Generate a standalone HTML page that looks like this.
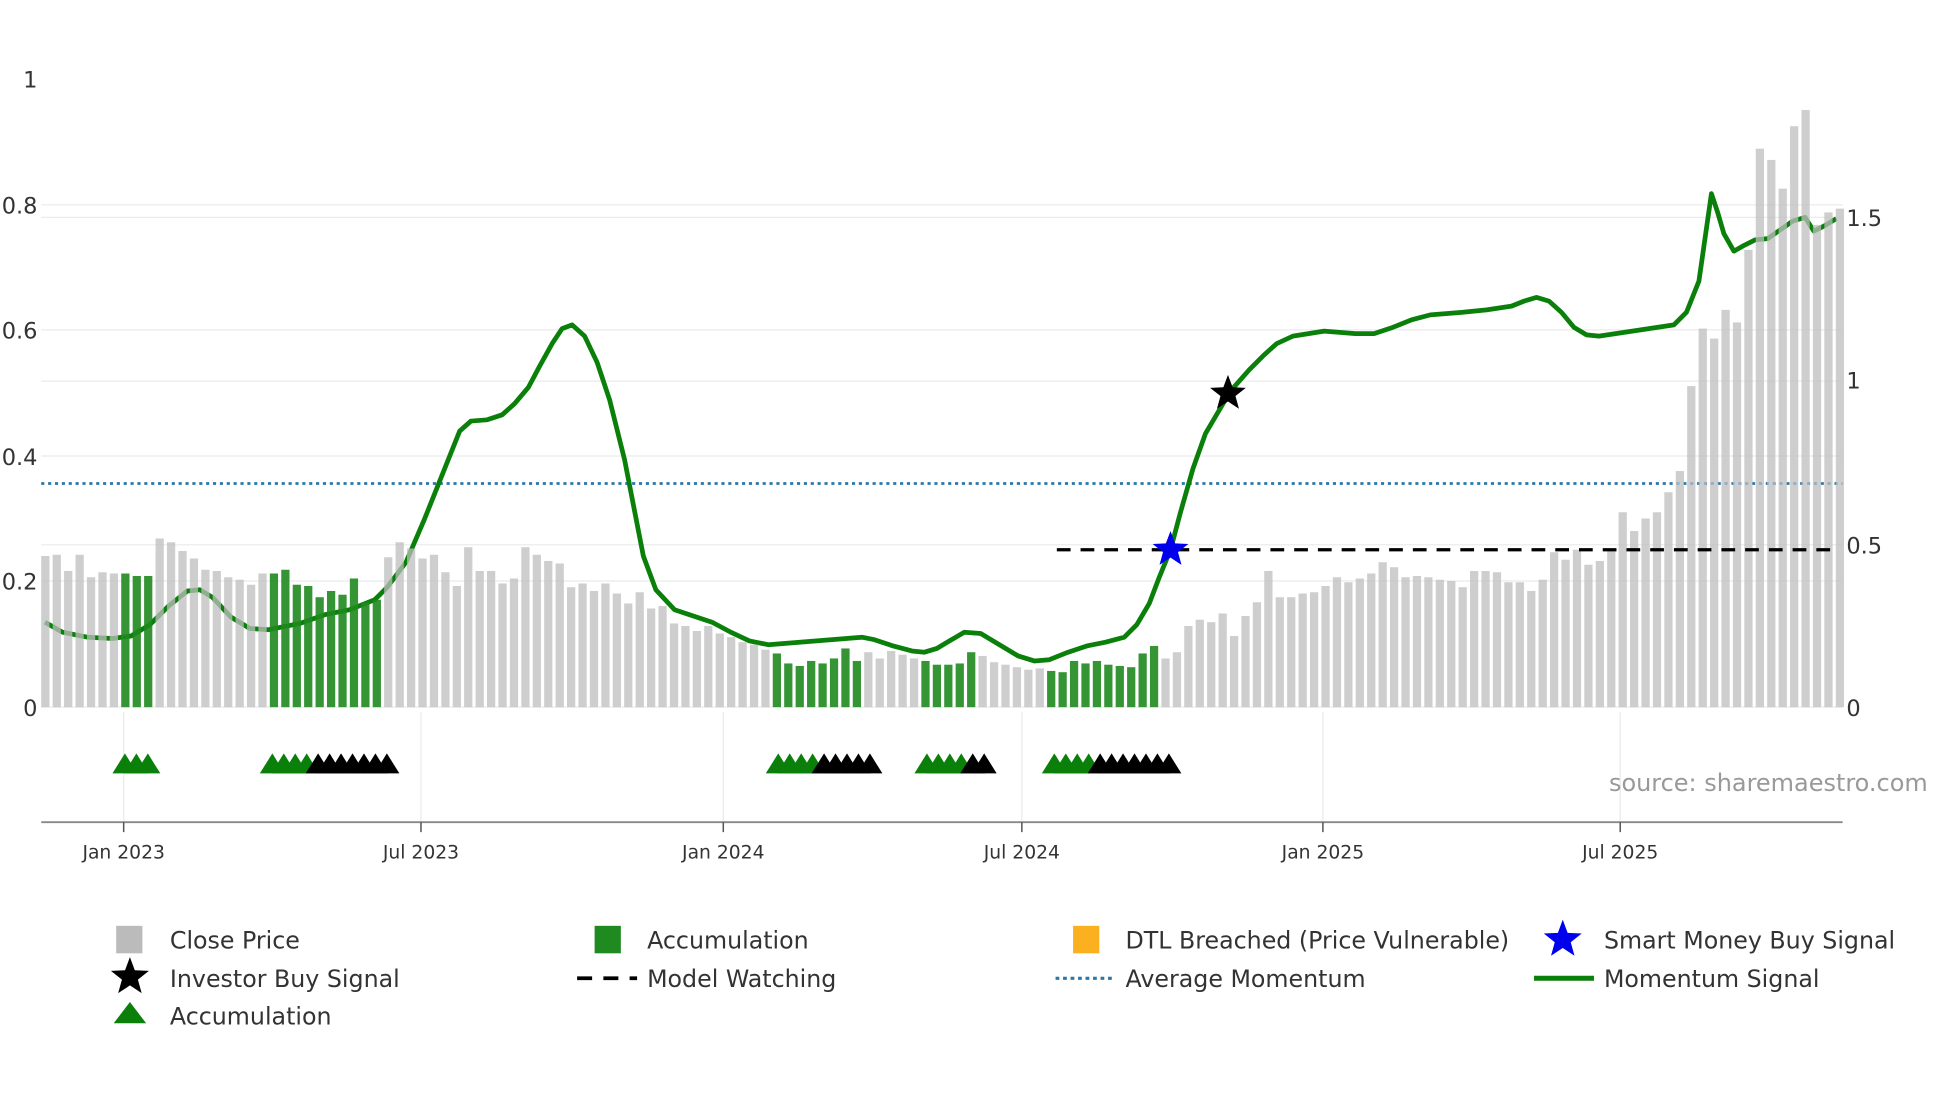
<!DOCTYPE html>
<html><head><meta charset="utf-8"><style>
html,body{margin:0;padding:0;background:#fff;}
svg{display:block;font-family:"DejaVu Sans","Liberation Sans",sans-serif;}
</style></head><body>
<svg id="s" width="1960" height="1102" viewBox="0 0 1569 882" preserveAspectRatio="none" xmlns="http://www.w3.org/2000/svg">
<g stroke="#ebebeb" stroke-width="1">
<line x1="33" x2="1475" y1="164" y2="164"/><line x1="33" x2="1475" y1="174" y2="174"/>
<line x1="33" x2="1475" y1="264" y2="264"/><line x1="33" x2="1475" y1="305" y2="305"/>
<line x1="33" x2="1475" y1="365" y2="365"/><line x1="33" x2="1475" y1="436" y2="436"/>
<line x1="33" x2="1475" y1="465" y2="465"/><line x1="33" x2="1475" y1="566" y2="566"/>
<line x1="99" x2="99" y1="570" y2="658"/><line x1="337" x2="337" y1="570" y2="658"/>
<line x1="579" x2="579" y1="570" y2="658"/><line x1="818" x2="818" y1="570" y2="658"/>
<line x1="1059" x2="1059" y1="570" y2="658"/><line x1="1297" x2="1297" y1="570" y2="658"/>
</g>
<line x1="33" x2="1475" y1="387" y2="387" stroke="#2a77aa" stroke-width="2.2" stroke-dasharray="2.5,3"/>
<polyline id="mom" fill="none" stroke="#0a800a" stroke-width="3.8" stroke-linejoin="round"/>
<g id="bars"></g>
<line x1="846" x2="1470" y1="440" y2="440" stroke="#000" stroke-width="2.6" stroke-dasharray="11,8"/>
<g id="tri"></g>
<polygon id="st1" fill="#000"/>
<polygon id="st2" fill="#0000ee"/>
<line x1="33" x2="1475" y1="658" y2="658" stroke="#888" stroke-width="1.5"/>
<g stroke="#555" stroke-width="1.2">
<line x1="99" x2="99" y1="658" y2="666"/><line x1="337" x2="337" y1="658" y2="666"/>
<line x1="579" x2="579" y1="658" y2="666"/><line x1="818" x2="818" y1="658" y2="666"/>
<line x1="1059" x2="1059" y1="658" y2="666"/><line x1="1297" x2="1297" y1="658" y2="666"/>
</g>
<g font-size="15" fill="#333" text-anchor="middle">
<text x="99" y="687">Jan 2023</text><text x="337" y="687">Jul 2023</text>
<text x="579" y="687">Jan 2024</text><text x="818" y="687">Jul 2024</text>
<text x="1059" y="687">Jan 2025</text><text x="1297" y="687">Jul 2025</text>
</g>
<g font-size="18" fill="#333" text-anchor="end">
<text x="30" y="70">1</text><text x="30" y="171">0.8</text><text x="30" y="271">0.6</text>
<text x="30" y="372">0.4</text><text x="30" y="472">0.2</text><text x="30" y="573">0</text>
</g>
<g font-size="18" fill="#333">
<text x="1478" y="181">1.5</text><text x="1478" y="311">1</text><text x="1478" y="443">0.5</text><text x="1478" y="573">0</text>
</g>
<text x="1288" y="633" font-size="19.2" fill="#999">source: sharemaestro.com</text>
<g font-size="19" fill="#333">
<rect x="93" y="741" width="21" height="22" fill="#bbb"/><text x="136" y="759">Close Price</text>
<rect x="476" y="741" width="21" height="22" fill="#1f8a1f"/><text x="518" y="759">Accumulation</text>
<rect x="859" y="741" width="21" height="22" fill="#fbb020"/><text x="901" y="759">DTL Breached (Price Vulnerable)</text>
<polygon id="lst2" fill="#0000ee"/><text x="1284" y="759">Smart Money Buy Signal</text>
<polygon id="lst1" fill="#000"/><text x="136" y="790">Investor Buy Signal</text>
<line x1="462" x2="510" y1="783" y2="783" stroke="#000" stroke-width="3" stroke-dasharray="12,9"/><text x="518" y="790">Model Watching</text>
<line x1="845" x2="890" y1="783" y2="783" stroke="#2a77aa" stroke-width="2.5" stroke-dasharray="3,3"/><text x="901" y="790">Average Momentum</text>
<line x1="1228" x2="1276" y1="783" y2="783" stroke="#0a800a" stroke-width="4"/><text x="1284" y="790">Momentum Signal</text>
<polygon points="91,819 104,802 117,819" fill="#0a800a"/><text x="136" y="820">Accumulation</text>
</g>
</svg>
<script>
var NS="http://www.w3.org/2000/svg";
var tops=[445,444,457,444,462,458,459,459,461,461,431,434,441,447,456,457,462,464,468,459,459,456,468,469,478,473,476,463,482,480,446,434,439,447,444,458,469,438,457,457,467,463,438,444,449,451,470,467,473,467,475,483,474,487,485,499,501,505,501,507,510,514,516,520,523,531,533,529,531,527,519,529,522,527,521,524,527,529,532,532,531,522,525,530,532,534,536,535,537,538,529,531,529,532,533,534,523,517,527,522,501,496,498,491,509,493,482,457,478,478,475,474,469,462,466,463,459,450,454,462,461,462,464,465,470,457,457,458,466,466,473,464,442,448,440,452,449,440,410,425,415,410,394,377,309,263,271,248,258,200,119,128,151,101,88,180,170,167];
var green=function(i){i=i+1;return (i>=8&&i<=10)||(i>=21&&i<=30)||(i>=65&&i<=72)||(i>=78&&i<=82)||(i>=89&&i<=98);};
var g=document.getElementById("bars");
for(var i=0;i<tops.length;i++){var r=document.createElementNS(NS,"rect");var x=33+i*9.15;
r.setAttribute("x",x);r.setAttribute("y",tops[i]);r.setAttribute("width",6.6);r.setAttribute("height",566-tops[i]);
if(green(i)){r.setAttribute("fill","#1f8a1f");r.setAttribute("fill-opacity","0.9");}else{r.setAttribute("fill","#bdbdbd");r.setAttribute("fill-opacity","0.75");}
g.appendChild(r);}
var pts="36,498 50,506 70,510 90,511 105,509 120,500 135,485 150,473 160,472 170,478 185,494 200,503 215,504 240,499 260,492 280,488 300,480 310,470 325,450 340,415 358,370 368,345 377,337 390,336 402,332 412,323 423,310 432,293 442,275 450,263 458,260 468,269 478,290 488,320 500,368 515,445 525,472 540,488 555,493 570,498 585,506 600,513 615,516 640,514 665,512 690,510 700,512 715,517 730,521 740,522 750,519 760,513 772,506 785,507 800,516 815,525 828,529 840,528 855,522 870,517 885,514 900,510 910,500 920,483 928,462 937,440 945,410 955,375 965,347 975,330 985,313 1000,296 1012,284 1022,275 1035,269 1060,265 1085,267 1100,267 1115,262 1130,256 1145,252 1170,250 1190,248 1210,245 1220,241 1230,238 1240,241 1250,250 1260,262 1270,268 1280,269 1300,266 1320,263 1340,260 1350,250 1360,225 1365,190 1370,155 1375,170 1380,187 1388,201 1395,197 1405,192 1415,191 1425,184 1435,177 1445,174 1452,185 1460,181 1470,175";
document.getElementById("mom").setAttribute("points",pts);
function star(cx,cy,R){var r=R*0.42,p=[];for(var k=0;k<10;k++){var a=-Math.PI/2+k*Math.PI/5,rr=k%2?r:R;p.push((cx+rr*Math.cos(a)).toFixed(1)+","+(cy+rr*Math.sin(a)).toFixed(1));}return p.join(" ");}
document.getElementById("st1").setAttribute("points",star(983,315,15));
document.getElementById("st2").setAttribute("points",star(937,440,15));
document.getElementById("lst1").setAttribute("points",star(104,782,16));
document.getElementById("lst2").setAttribute("points",star(1251,752,16));
var tg=document.getElementById("tri");
function tri(x,c){var p=document.createElementNS(NS,"polygon");p.setAttribute("points",(x-10)+",619 "+x+",603 "+(x+10)+",619");p.setAttribute("fill",c);tg.appendChild(p);}
function grp(start,ng,nb){var x=start;for(var k=0;k<ng;k++){tri(x,"#0a800a");x+=9.17;}for(k=0;k<nb;k++){tri(x,"#000");x+=9.17;}}
grp(100,3,0);grp(218,4,7);grp(623,4,5);grp(742,4,2);grp(844,4,7);
</script>
</body></html>
